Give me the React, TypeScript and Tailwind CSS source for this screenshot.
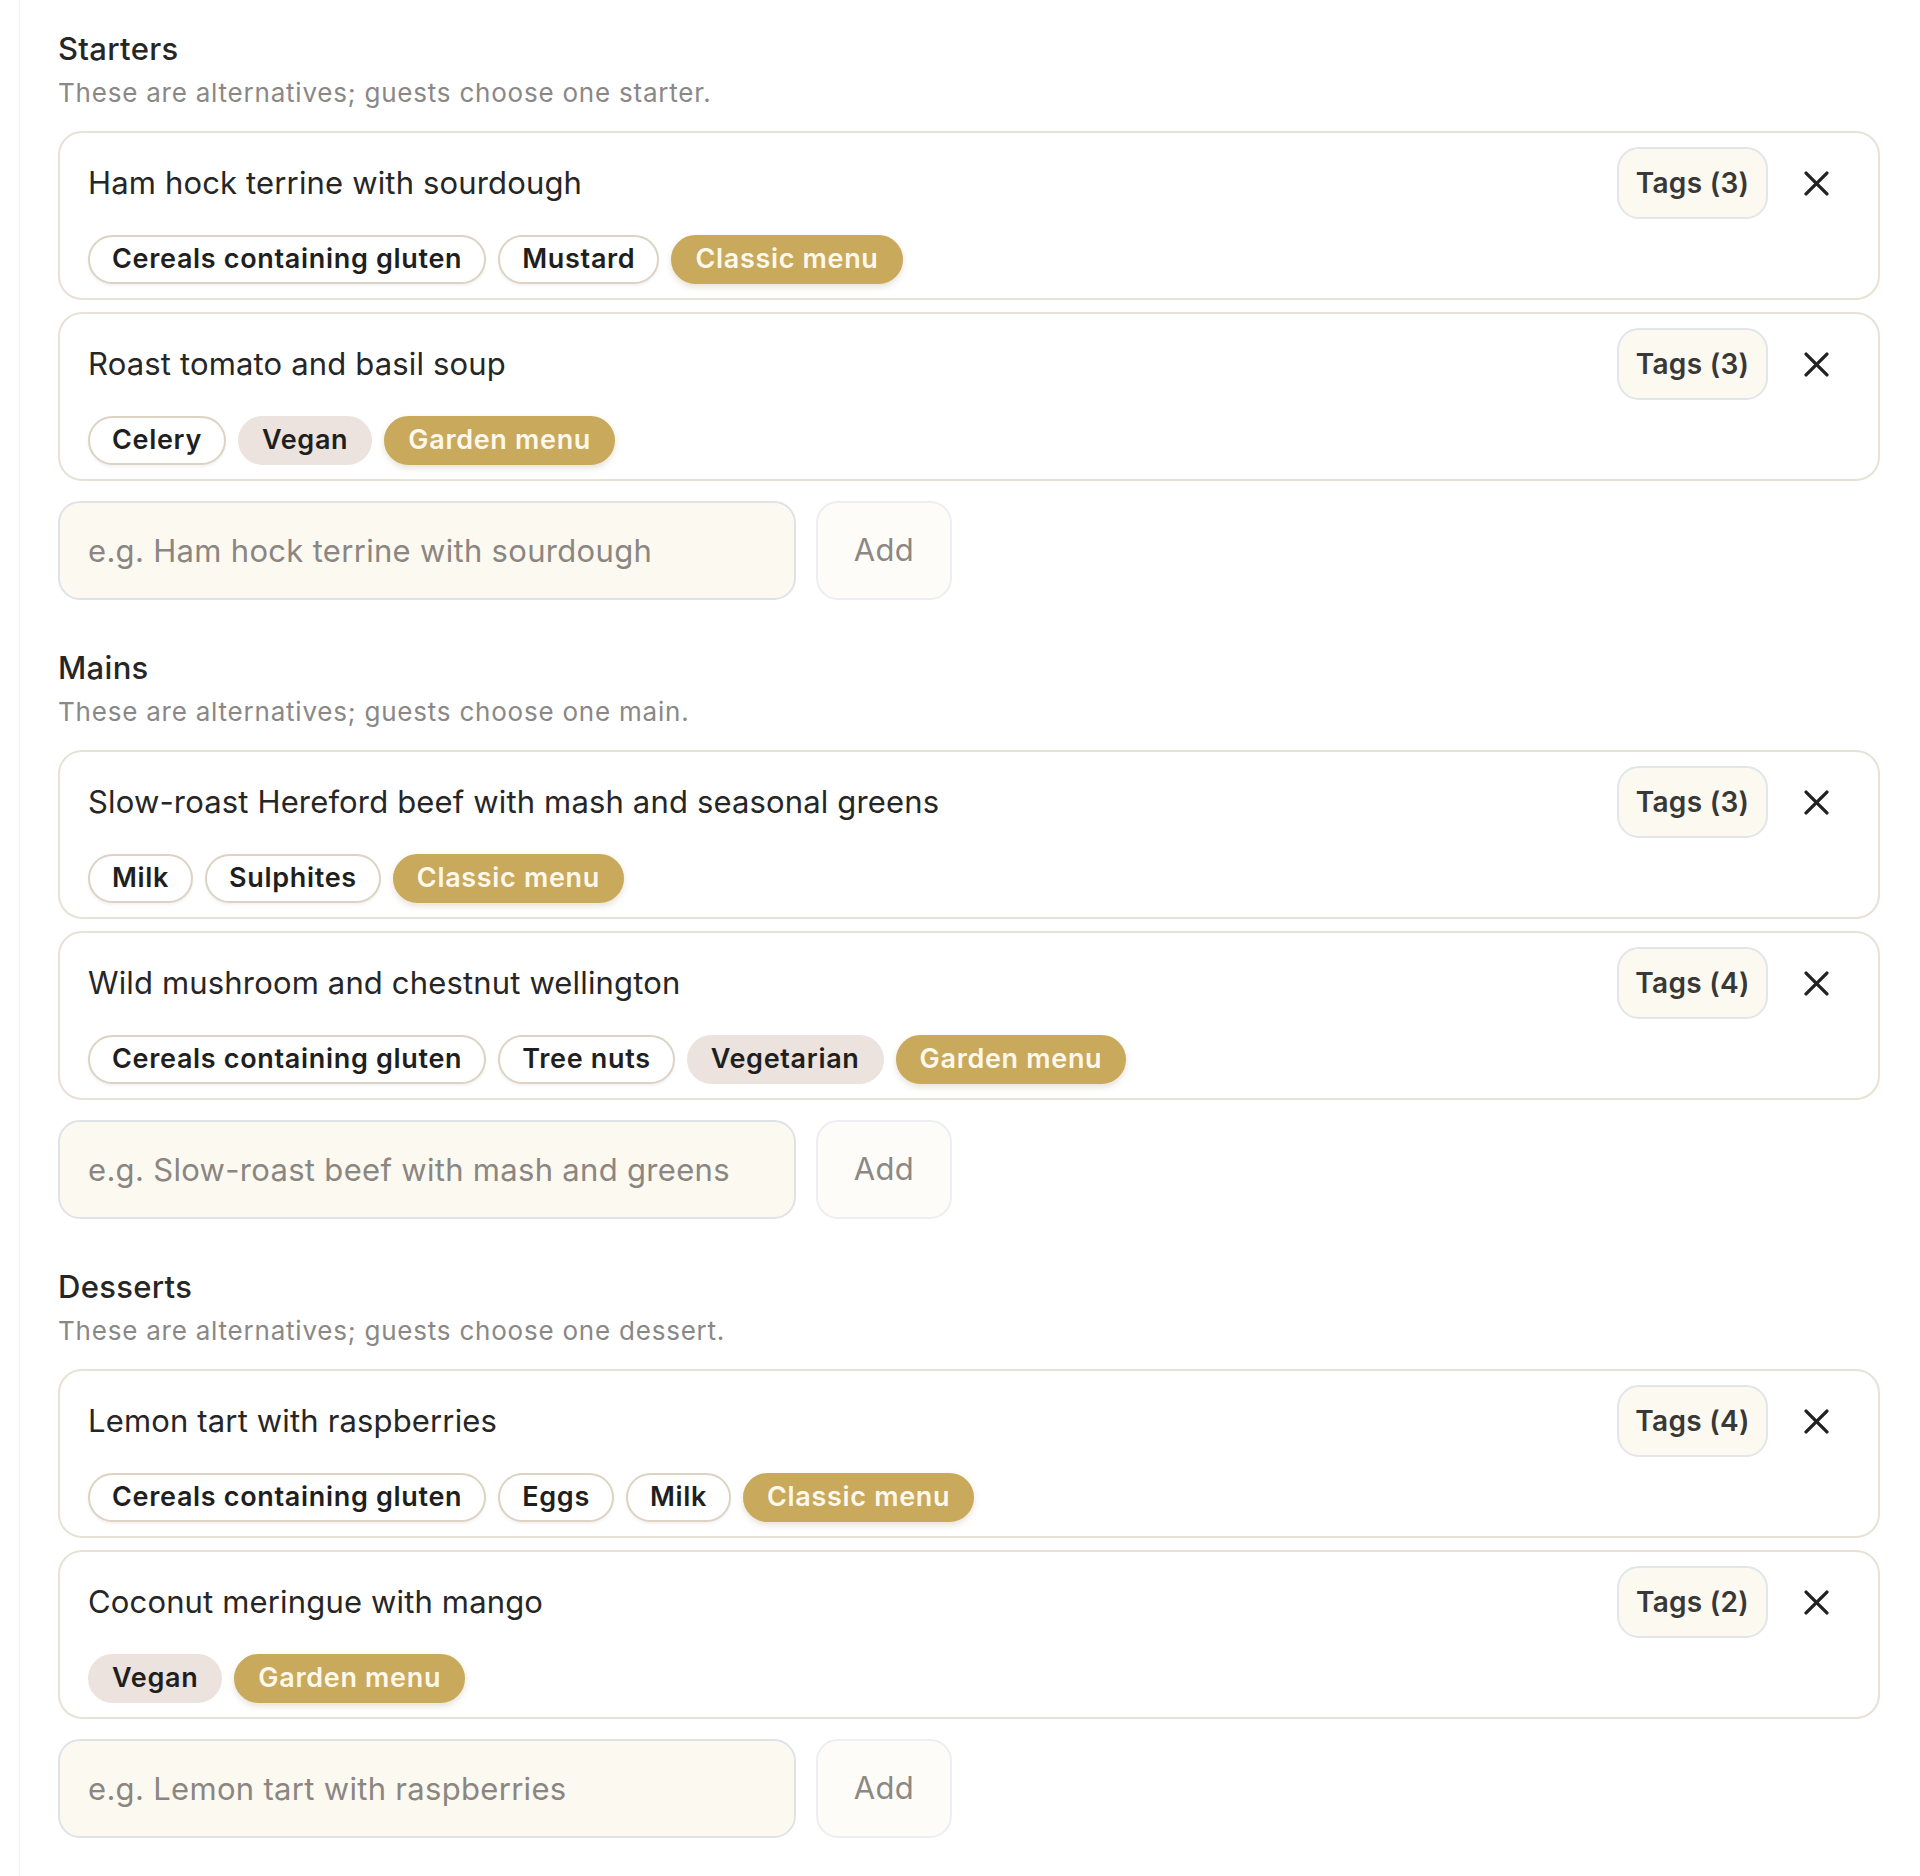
import React from "react";

type Kind = "allergen" | "diet" | "menu";
type Tag = { label: string; kind: Kind };
type Item = { name: string; tags: Tag[] };
type Section = { title: string; desc: string; placeholder: string; items: Item[] };

const A = (label: string): Tag => ({ label, kind: "allergen" });
const D = (label: string): Tag => ({ label, kind: "diet" });
const M = (label: string): Tag => ({ label, kind: "menu" });

const sections: Section[] = [
  {
    title: "Starters",
    desc: "These are alternatives; guests choose one starter.",
    placeholder: "e.g. Ham hock terrine with sourdough",
    items: [
      { name: "Ham hock terrine with sourdough", tags: [A("Cereals containing gluten"), A("Mustard"), M("Classic menu")] },
      { name: "Roast tomato and basil soup", tags: [A("Celery"), D("Vegan"), M("Garden menu")] },
    ],
  },
  {
    title: "Mains",
    desc: "These are alternatives; guests choose one main.",
    placeholder: "e.g. Slow-roast beef with mash and greens",
    items: [
      { name: "Slow-roast Hereford beef with mash and seasonal greens", tags: [A("Milk"), A("Sulphites"), M("Classic menu")] },
      {
        name: "Wild mushroom and chestnut wellington",
        tags: [A("Cereals containing gluten"), A("Tree nuts"), D("Vegetarian"), M("Garden menu")],
      },
    ],
  },
  {
    title: "Desserts",
    desc: "These are alternatives; guests choose one dessert.",
    placeholder: "e.g. Lemon tart with raspberries",
    items: [
      { name: "Lemon tart with raspberries", tags: [A("Cereals containing gluten"), A("Eggs"), A("Milk"), M("Classic menu")] },
      { name: "Coconut meringue with mango", tags: [D("Vegan"), M("Garden menu")] },
    ],
  },
];

function Pill({ tag }: { tag: Tag }) {
  if (tag.kind === "menu") {
    return (
      <span className="flex h-[49px] items-center rounded-full border-2 border-[#c9a95c] bg-[#c9a95c] px-[22px] text-[27px] font-semibold tracking-[0.025em] text-[#fdf8ec] shadow-[0_3px_6px_rgba(120,90,30,0.18)]">
        {tag.label}
      </span>
    );
  }
  if (tag.kind === "diet") {
    return (
      <span className="flex h-[49px] items-center rounded-full border-2 border-[#ece3de] bg-[#ece3de] px-[22px] text-[27px] font-semibold tracking-[0.025em] text-[#1f1f1f]">
        {tag.label}
      </span>
    );
  }
  return (
    <span className="flex h-[49px] items-center rounded-full border-2 border-[#ddd3c4] bg-white px-[22px] text-[27px] font-semibold tracking-[0.025em] text-[#1f1f1f] shadow-[0_2px_3px_rgba(0,0,0,0.05)]">
      {tag.label}
    </span>
  );
}

function XIcon() {
  return (
    <svg width="25" height="25" viewBox="0 0 24 24" fill="none" stroke="#222222" strokeWidth="3.2" strokeLinecap="round">
      <path d="M2 2 L22 22" />
      <path d="M22 2 L2 22" />
    </svg>
  );
}

function Card({ item }: { item: Item }) {
  return (
    <div className="flex flex-col gap-[16px] rounded-[24px] border-2 border-[#e8e1d6] bg-white pt-[14px] pb-[14px] pl-[28px] pr-[38px]">
      <div className="flex h-[72px] items-center justify-between">
        <span className="text-[31px] tracking-[0.005em] text-[#262626]">{item.name}</span>
        <div className="flex items-center gap-[24px]">
          <button className="flex h-[72px] w-[151px] items-center justify-center rounded-[22px] border-2 border-[#e2e5ea] bg-[#fcf9f0] text-[28px] font-semibold tracking-[0.01em] text-[#383838]">
            Tags ({item.tags.length})
          </button>
          <button className="flex h-[48px] w-[48px] items-center justify-center">
            <XIcon />
          </button>
        </div>
      </div>
      <div className="flex h-[49px] items-center gap-[12px]">
        {item.tags.map((t, i) => (
          <Pill key={i} tag={t} />
        ))}
      </div>
    </div>
  );
}

function SectionBlock({ s }: { s: Section }) {
  return (
    <section className="flex flex-col">
      <h2 className="text-[31px] leading-[36px] font-medium tracking-[0.01em] text-[#262626]">{s.title}</h2>
      <p className="mt-[9px] text-[26px] leading-[34px] tracking-[0.03em] text-[#8a8886]">{s.desc}</p>
      <div className="mt-[21px] flex flex-col gap-[12px]">
        {s.items.map((it, i) => (
          <Card key={i} item={it} />
        ))}
      </div>
      <div className="mt-[20px] flex items-center gap-[20px]">
        <input
          className="h-[99px] w-[738px] rounded-[22px] border-2 border-[#dfe3e8] bg-[#fcf9f1] px-[28px] text-[31px] tracking-[0.01em] text-[#262626] outline-none placeholder:text-[#8b8681]"
          placeholder={s.placeholder}
        />
        <button className="h-[99px] w-[136px] rounded-[22px] border-2 border-[#eceef1] bg-[#fdfcf8] text-[31px] tracking-[0.01em] text-[#8c8883]">
          Add
        </button>
      </div>
    </section>
  );
}

export default function App() {
  return (
    <div className="min-h-[1876px] bg-white pl-[19px] pr-[40px]" style={{ fontFamily: "Inter, 'Noto Sans', sans-serif" }}>
      <div className="flex min-h-[1876px] flex-col gap-[50px] border-l border-[#f1f1f1] pl-[38px] pt-[31px]">
        {sections.map((s, i) => (
          <SectionBlock key={i} s={s} />
        ))}
      </div>
    </div>
  );
}
